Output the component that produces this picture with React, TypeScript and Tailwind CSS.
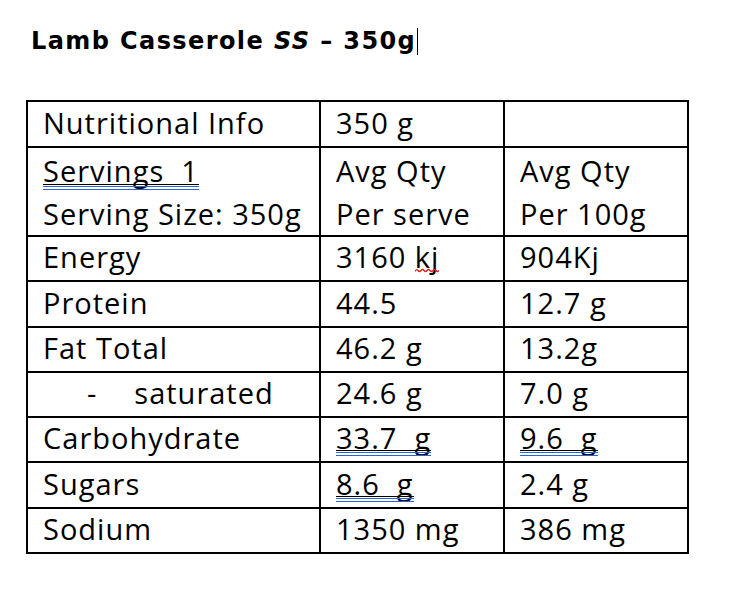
import React from "react";

// Word-style grammar mark: thin black underline plus the blue double line
const Marked = ({ children }: { children: React.ReactNode }) => (
  <span className="relative inline-block whitespace-pre">
    {children}
    <span className="absolute left-0 right-0 bottom-[7px] h-px bg-black" />
    <span className="absolute left-0 right-0 bottom-[5px] h-px bg-[#2c62d6]" />
    <span className="absolute left-0 right-0 bottom-[2px] h-px bg-[#2c62d6]" />
  </span>
);

// red squiggle for the spelling mark
const Squiggle = ({ children }: { children: React.ReactNode }) => (
  <span className="relative inline-block">
    {children}
    <svg className="absolute left-0 bottom-[4px]" width="24" height="5" viewBox="0 0 24 5">
      <path
        d="M0 3.5 Q1.5 0.5 3 2.5 T6 2.5 T9 2.5 T12 2.5 T15 2.5 T18 2.5 T21 2.5 T24 2.5"
        fill="none"
        stroke="#e02020"
        strokeWidth="1.3"
      />
    </svg>
  </span>
);

type Row = { h: string; tall?: boolean; cells: React.ReactNode[] };

const rows: Row[] = [
  { h: "h-[46px]", cells: ["Nutritional Info", "350 g", ""] },
  {
    h: "h-[89px]",
    tall: true,
    cells: [
      <>
        <Marked>Servings  1</Marked>
        <br />
        Serving Size: 350g
      </>,
      <>
        Avg Qty
        <br />
        Per serve
      </>,
      <>
        Avg Qty
        <br />
        Per 100g
      </>,
    ],
  },
  {
    h: "h-[44px]",
    cells: [
      "Energy",
      <>
        3160 <Squiggle>kj</Squiggle>
      </>,
      "904Kj",
    ],
  },
  { h: "h-[46px]", cells: ["Protein", "44.5", "12.7 g"] },
  { h: "h-[45px]", cells: ["Fat Total", "46.2 g", "13.2g"] },
  {
    h: "h-[45px]",
    cells: [
      <>
        <span className="ml-[44px]">-</span>
        <span className="ml-[37px]">saturated</span>
      </>,
      "24.6 g",
      "7.0 g",
    ],
  },
  { h: "h-[43px]", cells: ["Carbohydrate", <Marked>33.7  g</Marked>, <Marked>9.6  g</Marked>] },
  { h: "h-[46px]", cells: ["Sugars", <Marked>8.6  g</Marked>, "2.4 g"] },
  { h: "h-[45px]", cells: ["Sodium", "1350 mg", "386 mg"] },
];

export default function App() {
  return (
    <div className="w-[730px] h-[602px] bg-white text-black font-['Open_Sans',sans-serif]">
      <div className="pl-[31px] pt-[24px] h-[100px]">
        <h1 className="flex items-center font-['DejaVu_Sans',sans-serif] text-[24px] font-bold leading-[34px] tracking-[1.4px] whitespace-pre">
          Lamb Casserole <span className="italic">SS</span> – 350g
          <span className="ml-[1px] w-px h-[27px] bg-black" />
        </h1>
      </div>
      <table className="ml-[26px] w-[661px] border-collapse table-fixed">
        <colgroup>
          <col className="w-[293px]" />
          <col className="w-[184px]" />
          <col className="w-[184px]" />
        </colgroup>
        <tbody>
          {rows.map((r, i) => (
            <tr key={i} className={r.h}>
              {r.cells.map((c, j) => (
                <td
                  key={j}
                  className={
                    "border-2 border-black pl-[15px] pr-1 pt-0 align-middle text-[29px] tracking-[1px] " +
                    (r.tall ? "leading-[43px] pb-0" : "leading-[40px] pb-[3px]")
                  }
                >
                  {c}
                </td>
              ))}
            </tr>
          ))}
        </tbody>
      </table>
    </div>
  );
}
